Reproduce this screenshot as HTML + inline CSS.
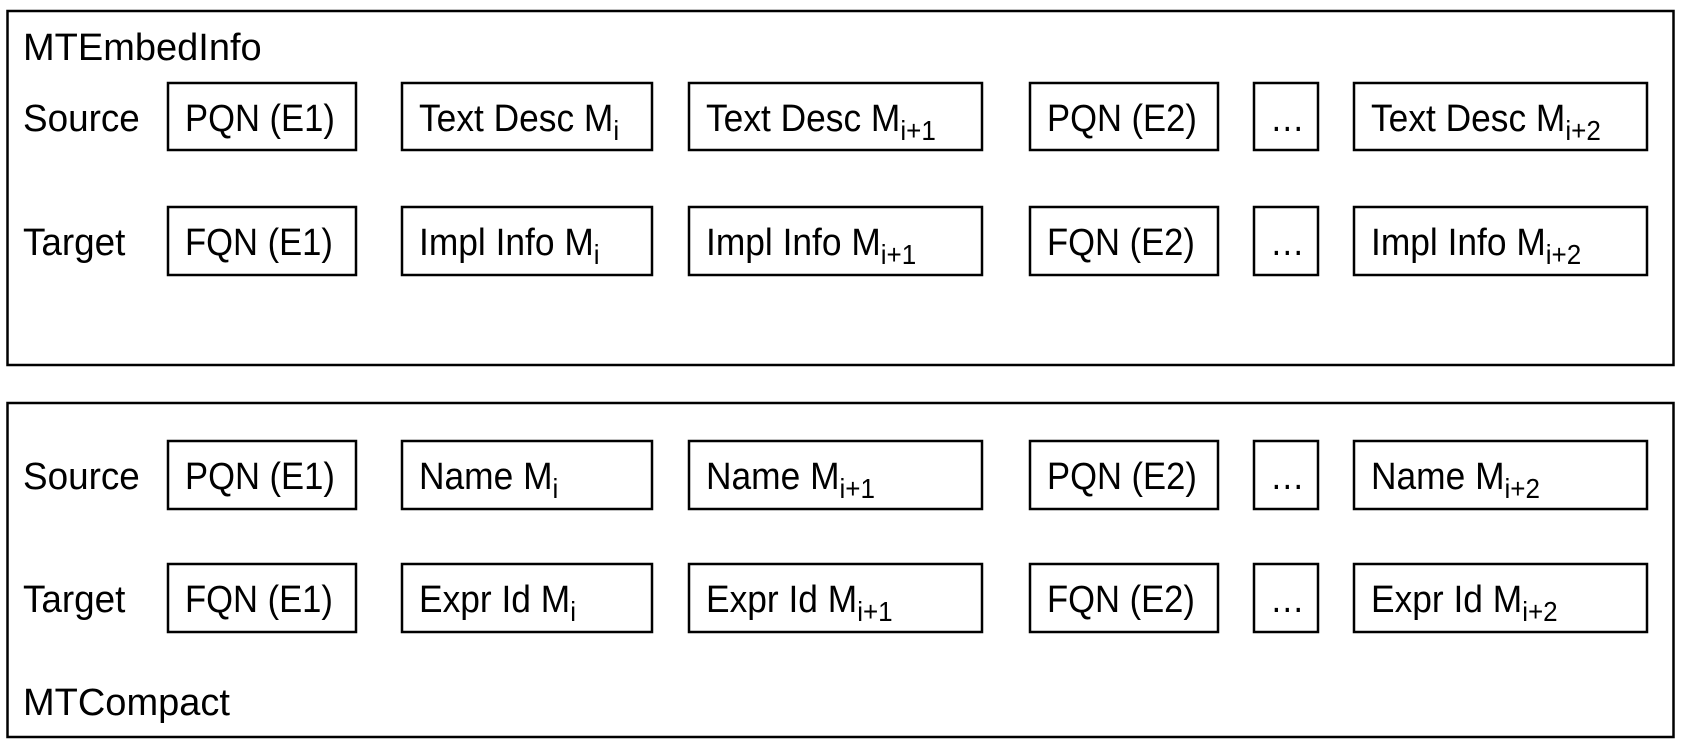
<!DOCTYPE html>
<html><head><meta charset="utf-8"><style>
html,body{margin:0;padding:0;background:#fff;}
svg{display:block;}
text{font-family:"Liberation Sans",sans-serif;font-size:38px;fill:#000;}
</style></head><body>
<svg width="1686" height="748" viewBox="0 0 1686 748" xmlns="http://www.w3.org/2000/svg">
<g fill="none" stroke="#000" stroke-width="2.5">
<rect x="7.5" y="11" width="1666" height="354"/>
<rect x="7.5" y="403" width="1666" height="334"/>
<rect x="168" y="83" width="188" height="67"/><rect x="402" y="83" width="250" height="67"/><rect x="689" y="83" width="293" height="67"/><rect x="1030" y="83" width="188" height="67"/><rect x="1254" y="83" width="64" height="67"/><rect x="1354" y="83" width="293" height="67"/>
<rect x="168" y="207" width="188" height="68"/><rect x="402" y="207" width="250" height="68"/><rect x="689" y="207" width="293" height="68"/><rect x="1030" y="207" width="188" height="68"/><rect x="1254" y="207" width="64" height="68"/><rect x="1354" y="207" width="293" height="68"/>
<rect x="168" y="441" width="188" height="68"/><rect x="402" y="441" width="250" height="68"/><rect x="689" y="441" width="293" height="68"/><rect x="1030" y="441" width="188" height="68"/><rect x="1254" y="441" width="64" height="68"/><rect x="1354" y="441" width="293" height="68"/>
<rect x="168" y="564" width="188" height="68"/><rect x="402" y="564" width="250" height="68"/><rect x="689" y="564" width="293" height="68"/><rect x="1030" y="564" width="188" height="68"/><rect x="1254" y="564" width="64" height="68"/><rect x="1354" y="564" width="293" height="68"/>
</g>
<g>
<text transform="translate(23,60) scale(1.0,1)">MTEmbedInfo</text>
<text transform="translate(23,715) scale(1.0,1)">MTCompact</text>

<text transform="translate(23,131) scale(0.97,1)">Source</text>
<text transform="translate(185,131) scale(0.91,1)">PQN (E1)</text>
<text transform="translate(419,131) scale(0.93,1)">Text Desc M<tspan font-size="28" dy="9">i</tspan></text>
<text transform="translate(706,131) scale(0.93,1)">Text Desc M<tspan font-size="28" dy="9">i+1</tspan></text>
<text transform="translate(1047,131) scale(0.91,1)">PQN (E2)</text>
<text transform="translate(1270,131) scale(0.91,1)">…</text>
<text transform="translate(1371,131) scale(0.93,1)">Text Desc M<tspan font-size="28" dy="9">i+2</tspan></text>

<text transform="translate(23,255) scale(0.97,1)">Target</text>
<text transform="translate(185,255) scale(0.91,1)">FQN (E1)</text>
<text transform="translate(419,255) scale(0.93,1)">Impl Info M<tspan font-size="28" dy="9">i</tspan></text>
<text transform="translate(706,255) scale(0.93,1)">Impl Info M<tspan font-size="28" dy="9">i+1</tspan></text>
<text transform="translate(1047,255) scale(0.91,1)">FQN (E2)</text>
<text transform="translate(1270,255) scale(0.91,1)">…</text>
<text transform="translate(1371,255) scale(0.93,1)">Impl Info M<tspan font-size="28" dy="9">i+2</tspan></text>

<text transform="translate(23,489) scale(0.97,1)">Source</text>
<text transform="translate(185,489) scale(0.91,1)">PQN (E1)</text>
<text transform="translate(419,489) scale(0.93,1)">Name M<tspan font-size="28" dy="9">i</tspan></text>
<text transform="translate(706,489) scale(0.93,1)">Name M<tspan font-size="28" dy="9">i+1</tspan></text>
<text transform="translate(1047,489) scale(0.91,1)">PQN (E2)</text>
<text transform="translate(1270,489) scale(0.91,1)">…</text>
<text transform="translate(1371,489) scale(0.93,1)">Name M<tspan font-size="28" dy="9">i+2</tspan></text>

<text transform="translate(23,612) scale(0.97,1)">Target</text>
<text transform="translate(185,612) scale(0.91,1)">FQN (E1)</text>
<text transform="translate(419,612) scale(0.93,1)">Expr Id M<tspan font-size="28" dy="9">i</tspan></text>
<text transform="translate(706,612) scale(0.93,1)">Expr Id M<tspan font-size="28" dy="9">i+1</tspan></text>
<text transform="translate(1047,612) scale(0.91,1)">FQN (E2)</text>
<text transform="translate(1270,612) scale(0.91,1)">…</text>
<text transform="translate(1371,612) scale(0.93,1)">Expr Id M<tspan font-size="28" dy="9">i+2</tspan></text>
</g>
</svg>
</body></html>
